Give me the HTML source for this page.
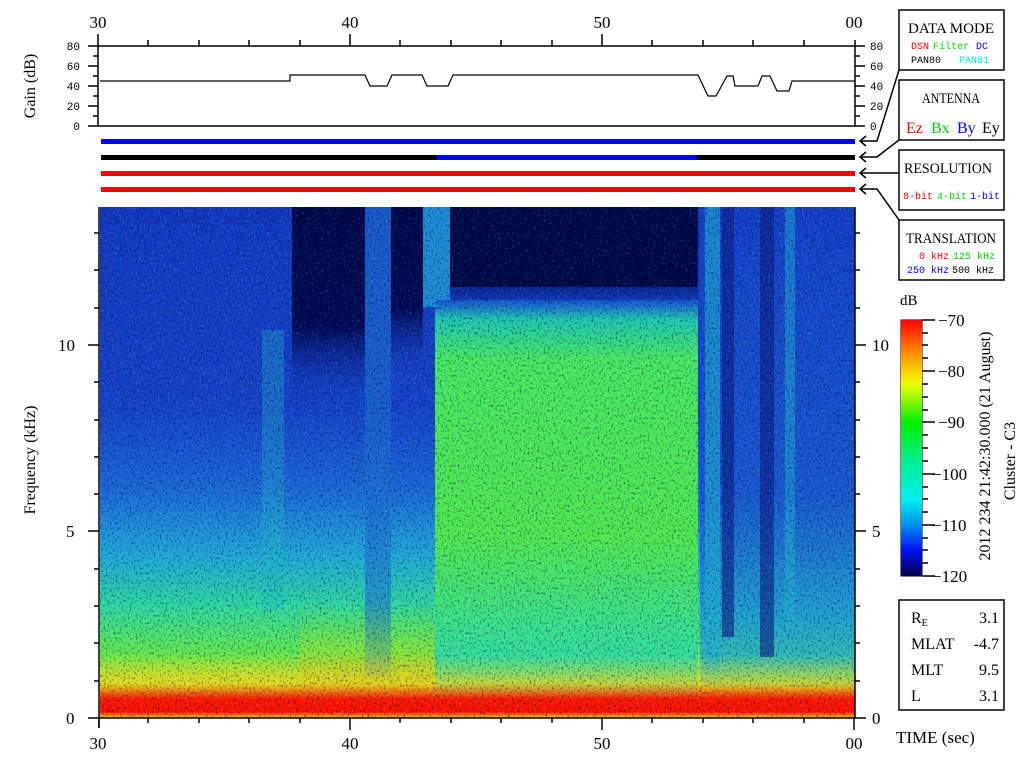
<!DOCTYPE html>
<html><head><meta charset="utf-8"><style>
html,body{margin:0;padding:0;background:#fff;width:1024px;height:768px;overflow:hidden}
svg{display:block}
svg{font-family:"Liberation Sans",sans-serif}
.m,.m text{font-family:"Liberation Mono",monospace}
.s,.s text{font-family:"Liberation Serif",serif}
</style></head><body>
<svg width="1024" height="768" viewBox="0 0 1024 768" xmlns="http://www.w3.org/2000/svg">
<defs>
<linearGradient id="leftg" x1="0" y1="0" x2="0" y2="1">
<stop offset="0" stop-color="#1238c0"/><stop offset="0.4" stop-color="#1644c8"/>
<stop offset="0.55" stop-color="#1c68d8"/><stop offset="0.68" stop-color="#20a8d8"/>
<stop offset="0.78" stop-color="#30d8a0"/><stop offset="0.87" stop-color="#60e850"/>
<stop offset="0.94" stop-color="#d8e820"/><stop offset="0.97" stop-color="#ff2000"/><stop offset="1" stop-color="#ff3000"/>
</linearGradient>
<linearGradient id="greeng" x1="0" y1="0" x2="0" y2="1">
<stop offset="0" stop-color="#1850d0"/><stop offset="0.05" stop-color="#20c8b0"/>
<stop offset="0.15" stop-color="#48e860"/><stop offset="0.6" stop-color="#50e850"/>
<stop offset="0.85" stop-color="#38e090"/><stop offset="1" stop-color="#30d8b0"/>
</linearGradient>
<linearGradient id="darkg" x1="0" y1="0" x2="0" y2="1">
<stop offset="0" stop-color="#000848"/><stop offset="0.6" stop-color="#000a55"/><stop offset="1" stop-color="#1440c8" stop-opacity="0"/>
</linearGradient>
<linearGradient id="rightg" x1="0" y1="0" x2="0" y2="1">
<stop offset="0" stop-color="#1440c8"/><stop offset="0.6" stop-color="#1a58d0"/>
<stop offset="0.85" stop-color="#20a0d0"/><stop offset="1" stop-color="#40d0a0"/>
</linearGradient>
<linearGradient id="botg" x1="0" y1="0" x2="0" y2="1">
<stop offset="0" stop-color="#d0e030" stop-opacity="0"/><stop offset="0.45" stop-color="#e8d820" stop-opacity="0.8"/>
<stop offset="0.7" stop-color="#ff1800"/><stop offset="0.9" stop-color="#ff1000"/><stop offset="1" stop-color="#e8d020"/>
</linearGradient>
<linearGradient id="orng" x1="0" y1="0" x2="0" y2="1">
<stop offset="0" stop-color="#60e040" stop-opacity="0"/><stop offset="0.5" stop-color="#a0e830" stop-opacity="0.7"/><stop offset="1" stop-color="#f0a010"/>
</linearGradient>
<linearGradient id="cb" x1="0" y1="1" x2="0" y2="0">
<stop offset="0" stop-color="#00004a"/><stop offset="0.1" stop-color="#0010f0"/>
<stop offset="0.2" stop-color="#0090f0"/><stop offset="0.3" stop-color="#00f0f0"/>
<stop offset="0.45" stop-color="#00f090"/><stop offset="0.6" stop-color="#00f000"/>
<stop offset="0.75" stop-color="#f0ff00"/><stop offset="0.87" stop-color="#ff9000"/><stop offset="1" stop-color="#ff0000"/>
</linearGradient>
<filter id="nz" x="0" y="0" width="1" height="1"><feTurbulence type="fractalNoise" baseFrequency="0.5 0.4" numOctaves="1" seed="3"/><feColorMatrix values="0 0 0 0 0  0 0 0 0 0  0 0 0 0 0.05  0 0 0 2.5 -1.3"/></filter>
<filter id="nz2" x="0" y="0" width="1" height="1"><feTurbulence type="fractalNoise" baseFrequency="0.5 0.4" numOctaves="1" seed="9"/><feColorMatrix values="0 0 0 0 0.2  0 0 0 0 0.9  0 0 0 0 0.95  0 0 0 2.5 -1.4"/></filter>
</defs>

<rect x="100" y="207" width="755" height="511" fill="url(#leftg)"/>
<rect x="700" y="207" width="155" height="480" fill="url(#rightg)"/>
<rect x="292" y="207" width="73" height="200" fill="url(#darkg)"/>
<rect x="391" y="207" width="32" height="170" fill="url(#darkg)"/>
<rect x="450" y="207" width="248" height="110" fill="url(#darkg)"/>
<rect x="450" y="207" width="248" height="80" fill="#000848"/>
<rect x="365" y="207" width="26" height="470" fill="#1c70d0" opacity="0.6"/>
<rect x="423" y="207" width="27" height="100" fill="#20a0d8" opacity="0.8"/>
<rect x="435" y="300" width="263" height="395" fill="url(#greeng)"/>
<rect x="262" y="330" width="22" height="280" fill="#20b8c8" opacity="0.35"/>
<rect x="705" y="207" width="15" height="480" fill="#20b0d0" opacity="0.6"/>
<rect x="722" y="207" width="12" height="430" fill="#0a1a80" opacity="0.6"/>
<rect x="760" y="207" width="14" height="450" fill="#0a1a80" opacity="0.6"/>
<rect x="785" y="207" width="10" height="430" fill="#20b0d0" opacity="0.5"/>
<rect x="300" y="600" width="135" height="95" fill="url(#orng)" opacity="0.7"/>
<rect x="100" y="655" width="755" height="63" fill="url(#botg)"/>
<rect x="100" y="207" width="755" height="511" filter="url(#nz)" opacity="0.7"/>
<rect x="100" y="207" width="755" height="511" filter="url(#nz2)" opacity="0.35"/>

<g stroke="#000" stroke-width="1.5" fill="none">
<path d="M98 34V126M88 46H855M88 126H855M855 40V126"/>
<path d="M88 66H98M88 86H98M88 106H98M93 56H98M93 76H98M93 96H98M93 116H98"/>
<path d="M855 46H865M855 66H865M855 86H865M855 106H865M855 126H865M855 56H860M855 76H860M855 96H860M855 116H860"/>
<path d="M350 34V46M602 34V46M148 40V46M199 40V46M249 40V46M300 40V46M400 40V46M451 40V46M501 40V46M552 40V46M652 40V46M703 40V46M753 40V46M804 40V46"/>
<path stroke-width="1.2" d="M100 81H290V75H365L370 86H387L392 75H422L427 86H448L453 75H698L708 96H716L727 76H733L735 86H758L762 76H770L777 91H789L792 81H855"/>
<path d="M99 207V728M99 718H855M855 207V718"/>
<path d="M99 728V718M350 718V730M602 718V730M854 718V730M148 718V723M199 718V723M249 718V723M300 718V723M400 718V723M451 718V723M501 718V723M552 718V723M652 718V723M703 718V723M753 718V723M804 718V723"/>
<path d="M88 718H99M88 531H99M88 345H99M94 681H99M94 643H99M94 606H99M94 569H99M94 494H99M94 457H99M94 420H99M94 382H99M94 308H99M94 270H99M94 233H99"/>
<path d="M855 718H866M855 531H866M855 345H866M855 681H860M855 643H860M855 606H860M855 569H860M855 494H860M855 457H860M855 420H860M855 382H860M855 308H860M855 270H860M855 233H860"/>
<path d="M899 70L877 141H860M866 136L860 141L866 146"/>
<path d="M899 140L877 157H860M866 152L860 157L866 162"/>
<path d="M899 173H860M866 168L860 173L866 178"/>
<path d="M899 220L877 189H860M866 184L860 189L866 194"/>
<rect x="899" y="10" width="105" height="60"/>
<rect x="899" y="80" width="105" height="60"/>
<rect x="899" y="150" width="105" height="60"/>
<rect x="899" y="220" width="105" height="60"/>
<rect x="899" y="600" width="105" height="110"/>
<rect x="901" y="320" width="21" height="256" stroke-width="1"/>
<path d="M922 320H935M922 371H935M922 422H935M922 474H935M922 525H935M922 576H935M922 333H928M922 345H928M922 358H928M922 384H928M922 397H928M922 410H928M922 435H928M922 448H928M922 461H928M922 487H928M922 499H928M922 512H928M922 538H928M922 550H928M922 563H928"/>
</g>
<rect x="901" y="320" width="21" height="256" fill="url(#cb)"/>
<rect x="101" y="139" width="754" height="5" fill="#0000ff"/>
<rect x="101" y="155" width="754" height="5" fill="#000"/>
<rect x="437" y="155" width="260" height="5" fill="#0000ff"/>
<rect x="101" y="171" width="754" height="5" fill="#ff0000"/>
<rect x="101" y="187" width="754" height="5" fill="#ff0000"/>

<g font-size="17" class="s" text-anchor="middle">
<text x="98" y="28">30</text><text x="350" y="28">40</text><text x="602" y="28">50</text><text x="854" y="28">00</text>
<text x="98" y="749">30</text><text x="350" y="749">40</text><text x="602" y="749">50</text><text x="854" y="749">00</text>
</g>
<g font-size="17" class="s">
<text x="66" y="724">0</text><text x="66" y="537">5</text><text x="58" y="351">10</text>
<text x="872" y="724">0</text><text x="872" y="537">5</text><text x="872" y="351">10</text>
<text x="896" y="743">TIME (sec)</text>
<text x="900" y="305" font-size="15">dB</text>
</g>
<g font-size="11" class="m" text-anchor="end">
<text x="80" y="50">80</text><text x="80" y="70">60</text><text x="80" y="90">40</text><text x="80" y="110">20</text><text x="80" y="130">0</text>
</g>
<g font-size="11" class="m">
<text x="870" y="50">80</text><text x="870" y="70">60</text><text x="870" y="90">40</text><text x="870" y="110">20</text><text x="870" y="130">0</text>
</g>
<g font-size="17" class="s">
<text x="938" y="326">−70</text><text x="938" y="377">−80</text><text x="938" y="428">−90</text>
<text x="932" y="480">−100</text><text x="932" y="531">−110</text><text x="932" y="582">−120</text>
</g>
<text class="s" font-size="16" transform="translate(35,460) rotate(-90)" text-anchor="middle">Frequency (kHz)</text>
<text class="s" font-size="16" transform="translate(35,86) rotate(-90)" text-anchor="middle">Gain (dB)</text>
<text class="s" font-size="16" transform="translate(990,446) rotate(-90)" text-anchor="middle">2012 234 21:42:30.000 (21 August)</text>
<text class="s" font-size="16" transform="translate(1015,461) rotate(-90)" text-anchor="middle">Cluster - C3</text>

<g class="s" font-size="15">
<text x="908" y="33" textLength="86" lengthAdjust="spacingAndGlyphs">DATA MODE</text>
<text x="922" y="103" textLength="58" lengthAdjust="spacingAndGlyphs">ANTENNA</text>
<text x="904" y="173" textLength="88" lengthAdjust="spacingAndGlyphs">RESOLUTION</text>
<text x="906" y="243" textLength="90" lengthAdjust="spacingAndGlyphs">TRANSLATION</text>
</g>
<g class="m" font-size="10">
<text x="911" y="49" fill="#ff0000">DSN</text><text x="933" y="49" fill="#00e000">Filter</text><text x="976" y="49" fill="#0000ff">DC</text>
<text x="911" y="63">PAN80</text><text x="959" y="63" fill="#00e0e0">PAN81</text>
<text x="903" y="199" fill="#ff0000">8-bit</text><text x="937" y="199" fill="#00d000">4-bit</text><text x="970" y="199" fill="#0000ff">1-bit</text>
<text x="919" y="259" fill="#ff0000">0 kHz</text><text x="953" y="259" fill="#00d000">125 kHz</text>
<text x="907" y="273" fill="#0000ff">250 kHz</text><text x="952" y="273">500 kHz</text>
</g>
<g class="s" font-size="16">
<text x="906" y="133" fill="#ff0000">Ez</text><text x="931" y="133" fill="#00d000">Bx</text><text x="957" y="133" fill="#0000ff">By</text><text x="982" y="133">Ey</text>
</g>
<g class="s" font-size="16">
<text x="911" y="623">R<tspan font-size="10" dy="3">E</tspan></text>
<text x="911" y="649">MLAT</text><text x="911" y="675">MLT</text><text x="911" y="701">L</text>
</g>
<g class="s" font-size="16" text-anchor="end">
<text x="999" y="623">3.1</text><text x="999" y="649">-4.7</text><text x="999" y="675">9.5</text><text x="999" y="701">3.1</text>
</g>
</svg>
</body></html>
